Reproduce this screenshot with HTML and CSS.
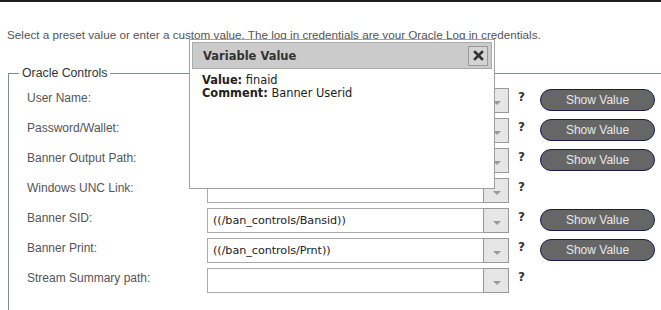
FILE: index.html
```html
<!DOCTYPE html>
<html>
<head>
    <title>Oracle Controls</title>
    <link rel="stylesheet" href="styles.css">
</head>
<body>
    <p class="intro">Select a preset value or enter a custom value. The log in credentials are your Oracle Log in credentials.</p>

    <fieldset class="controls">
        <legend>Oracle Controls</legend>

        <div class="row">
            <label>User Name:</label>
            <div class="combo"><input type="text" value=""><span class="drop"></span></div>
            <span class="help">?</span>
            <button class="showValue">Show Value</button>
        </div>
        <div class="row">
            <label>Password/Wallet:</label>
            <div class="combo"><input type="text" value=""><span class="drop"></span></div>
            <span class="help">?</span>
            <button class="showValue">Show Value</button>
        </div>
        <div class="row">
            <label>Banner Output Path:</label>
            <div class="combo"><input type="text" value=""><span class="drop"></span></div>
            <span class="help">?</span>
            <button class="showValue">Show Value</button>
        </div>
        <div class="row">
            <label>Windows UNC Link:</label>
            <div class="combo"><input type="text" value=""><span class="drop"></span></div>
            <span class="help">?</span>
        </div>
        <div class="row">
            <label>Banner SID:</label>
            <div class="combo"><input type="text" value="((/ban_controls/Bansid))"><span class="drop"></span></div>
            <span class="help">?</span>
            <button class="showValue">Show Value</button>
        </div>
        <div class="row">
            <label>Banner Print:</label>
            <div class="combo"><input type="text" value="((/ban_controls/Prnt))"><span class="drop"></span></div>
            <span class="help">?</span>
            <button class="showValue">Show Value</button>
        </div>
        <div class="row">
            <label>Stream Summary path:</label>
            <div class="combo"><input type="text" value=""><span class="drop"></span></div>
            <span class="help">?</span>
        </div>
    </fieldset>

    <div class="dialog">
        <div class="dialogTitle">
            <span>Variable Value</span>
            <button class="close">
                <svg width="11" height="11" viewBox="0 0 11 11">
                    <path d="M2 2 L9 9 M9 2 L2 9" stroke="#333" stroke-width="2.6" stroke-linecap="square"/>
                </svg>
            </button>
        </div>
        <div class="dialogBody">
            <div><b>Value:</b> finaid</div>
            <div><b>Comment:</b> Banner Userid</div>
        </div>
    </div>
</body>
</html>
```

FILE: styles.css
```css
html, body {
    margin: 0;
    padding: 0;
    overflow: hidden;
}

body {
    border-top: 2px solid #1e1e1e;
    font-family: "Liberation Sans", Arial, sans-serif;
    color: #555;
    width: 661px;
    height: 308px;
    position: relative;
}

.intro {
    margin: 26px 0 0 7px;
    font-size: 11.7px;
    line-height: 14px;
    white-space: nowrap;
}

.controls {
    box-sizing: border-box;
    margin: 24px 0 0 8px;
    padding: 8px 0 20px 18px;
    width: 653px;
    border: 1px solid #7d8c99;
    border-right: none;
}

.controls legend {
    padding: 0 3px;
    margin-left: -8px;
    font-size: 12.3px;
    color: #333;
}

.row {
    display: flex;
    align-items: flex-start;
    height: 30px;
}

.row label {
    width: 180px;
    font-size: 12px;
    padding-top: 3px;
    color: #555;
}

.combo {
    display: flex;
    width: 302px;
    height: 25px;
}

.combo input {
    flex: 1;
    min-width: 0;
    margin: 0;
    padding: 0 5px;
    border: 1px solid #aaa;
    border-right: none;
    font-family: "DejaVu Sans", Verdana, sans-serif;
    font-size: 11.2px;
    letter-spacing: -0.05px;
    line-height: normal;
    color: #222;
    background: #fff;
    outline: none;
}

.drop {
    width: 24px;
    border: 1px solid #999;
    background: #e6e6e6;
    position: relative;
}

.drop::after {
    content: "";
    position: absolute;
    left: 9px;
    top: 12px;
    border-left: 4px solid transparent;
    border-right: 4px solid transparent;
    border-top: 4px solid #999;
}

.help {
    width: 22px;
    padding: 2px 0 0 9px;
    font-family: "DejaVu Sans", Verdana, sans-serif;
    font-weight: bold;
    font-size: 12px;
    color: #333;
}

.showValue {
    margin: 1px 0 0 0;
    width: 115px;
    height: 22px;
    border: 1px solid #1a1a50;
    border-radius: 11px;
    background-color: #666;
    color: #e8e8e8;
    font-family: "Liberation Sans", Arial, sans-serif;
    font-size: 12px;
    padding: 0;
    cursor: pointer;
}

.dialog {
    position: absolute;
    left: 189px;
    top: 37px;
    width: 300px;
    height: 144px;
    padding: 2px;
    background: #fff;
    border: 1px solid #a0a0a0;
    font-family: "DejaVu Sans", Verdana, sans-serif;
    color: #222;
}

.dialogTitle {
    display: flex;
    align-items: center;
    justify-content: space-between;
    height: 25px;
    padding: 0 3px 0 10px;
    background: #cbcbcb;
    border: 1px solid #aaa;
    font-size: 11.5px;
    font-weight: bold;
    color: #333;
}

.close {
    display: flex;
    align-items: center;
    justify-content: center;
    width: 20px;
    height: 20px;
    padding: 0;
    border: 1px solid #999;
    background: #d4d4d4;
    cursor: pointer;
}

.dialogBody {
    padding: 5px 10px;
    font-size: 11.4px;
    line-height: 13px;
}

.dialogBody b {
    color: #222;
}
```
